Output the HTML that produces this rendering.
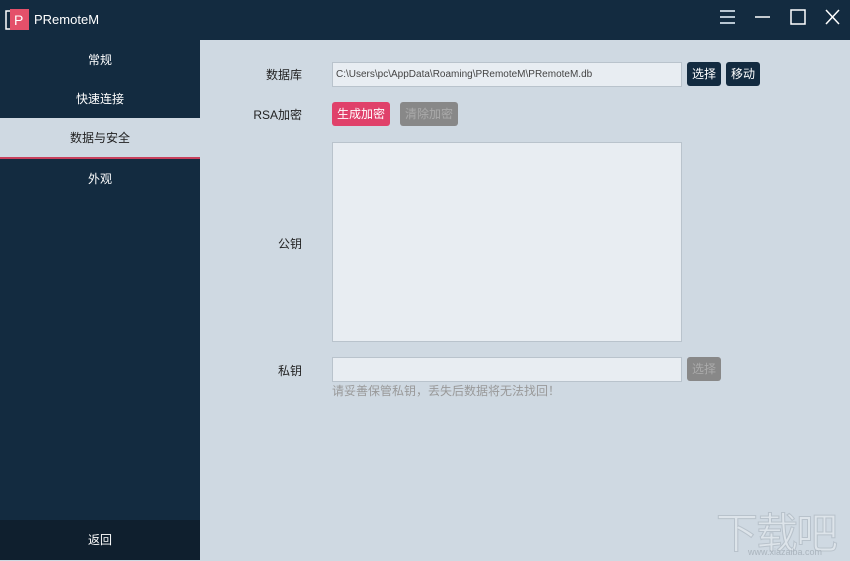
<!DOCTYPE html>
<html><head><meta charset="utf-8"><style>
*{margin:0;padding:0;box-sizing:border-box}
body{width:850px;height:560px;overflow:hidden;background:#cfd9e2;font-family:"Liberation Sans","Noto Sans CJK SC",sans-serif;font-size:12px;position:relative}
.title{position:absolute;left:0;top:0;width:850px;height:40px;background:#132b40}
.side{position:absolute;left:0;top:40px;width:200px;height:520px;background:#132b40}
.item{position:absolute;left:0;width:200px;height:40px;line-height:40px;text-align:center;color:#fff;font-size:12px}
.sel{background:#cfd9e2;color:#222;border-bottom:2px solid #c8405c}
.back{position:absolute;left:0;bottom:0;width:200px;height:40px;background:#0f1f2e;color:#fff;text-align:center;line-height:40px}
.lbl{position:absolute;width:62px;text-align:right;color:#222;font-size:12px}
.inp{position:absolute;background:#e8edf2;border:1px solid #b9c3cc}
.btn{position:absolute;height:24px;line-height:24px;text-align:center;color:#fff;border-radius:3px;font-size:12px}
</style></head><body>
<div class="title">
 <svg style="position:absolute;left:5px;top:9px" width="26" height="22"><rect x="1" y="2" width="20" height="18" fill="none" stroke="#fff" stroke-width="1.5"/><rect x="5" y="0" width="19" height="21" fill="#e4506a"/><text x="9" y="16" fill="#fff" font-size="14" font-family="Liberation Sans">P</text></svg>
 <div style="position:absolute;left:34px;top:12px;color:#fff;font-size:13px">PRemoteM</div>
 <svg style="position:absolute;left:700px;top:0" width="150" height="40">
  <g stroke="#b8c6d2" stroke-width="2"><line x1="20" y1="11" x2="35" y2="11"/><line x1="20" y1="17" x2="35" y2="17"/><line x1="20" y1="23" x2="35" y2="23"/></g>
  <line x1="55" y1="17" x2="70" y2="17" stroke="#fff" stroke-width="1.5"/>
  <rect x="91" y="10" width="14" height="14" fill="none" stroke="#fff" stroke-width="1.5"/>
  <path d="M126 10 L139 24 M139 10 L126 24" stroke="#fff" stroke-width="1.5"/>
 </svg>
</div>
<div class="side">
 <div class="item" style="top:0">常规</div>
 <div class="item" style="top:39px">快速连接</div>
 <div class="item sel" style="top:78px;height:41px">数据与安全</div>
 <div class="item" style="top:119px">外观</div>
 <div class="back">返回</div>
</div>
<div class="lbl" style="left:240px;top:66px">数据库</div>
<div class="inp" style="left:332px;top:62px;width:350px;height:25px;font-size:10px;color:#444;line-height:23px;padding-left:3px">C:\Users\pc\AppData\Roaming\PRemoteM\PRemoteM.db</div>
<div class="btn" style="left:687px;top:62px;width:34px;background:#132b40">选择</div>
<div class="btn" style="left:726px;top:62px;width:34px;background:#132b40">移动</div>
<div class="lbl" style="left:240px;top:106px">RSA加密</div>
<div class="btn" style="left:332px;top:102px;width:58px;background:#e0416a">生成加密</div>
<div class="btn" style="left:400px;top:102px;width:58px;background:#888;color:#aaa">清除加密</div>
<div class="inp" style="left:332px;top:142px;width:350px;height:200px"></div>
<div class="lbl" style="left:240px;top:235px">公钥</div>
<div class="lbl" style="left:240px;top:362px">私钥</div>
<div class="inp" style="left:332px;top:357px;width:350px;height:25px"></div>
<div class="btn" style="left:687px;top:357px;width:34px;background:#888;color:#aaa">选择</div>
<div style="position:absolute;left:332px;top:382px;color:#999;font-size:12px">请妥善保管私钥，丢失后数据将无法找回！</div>
<div style="position:absolute;left:716px;top:500px;color:#dde4ea;font-size:42px;letter-spacing:-2px;-webkit-text-stroke:1px #b8c2cb">下载吧</div>
<div style="position:absolute;left:748px;top:547px;color:#aab4bd;font-size:9px">www.xiazaiba.com</div>
</body></html>
